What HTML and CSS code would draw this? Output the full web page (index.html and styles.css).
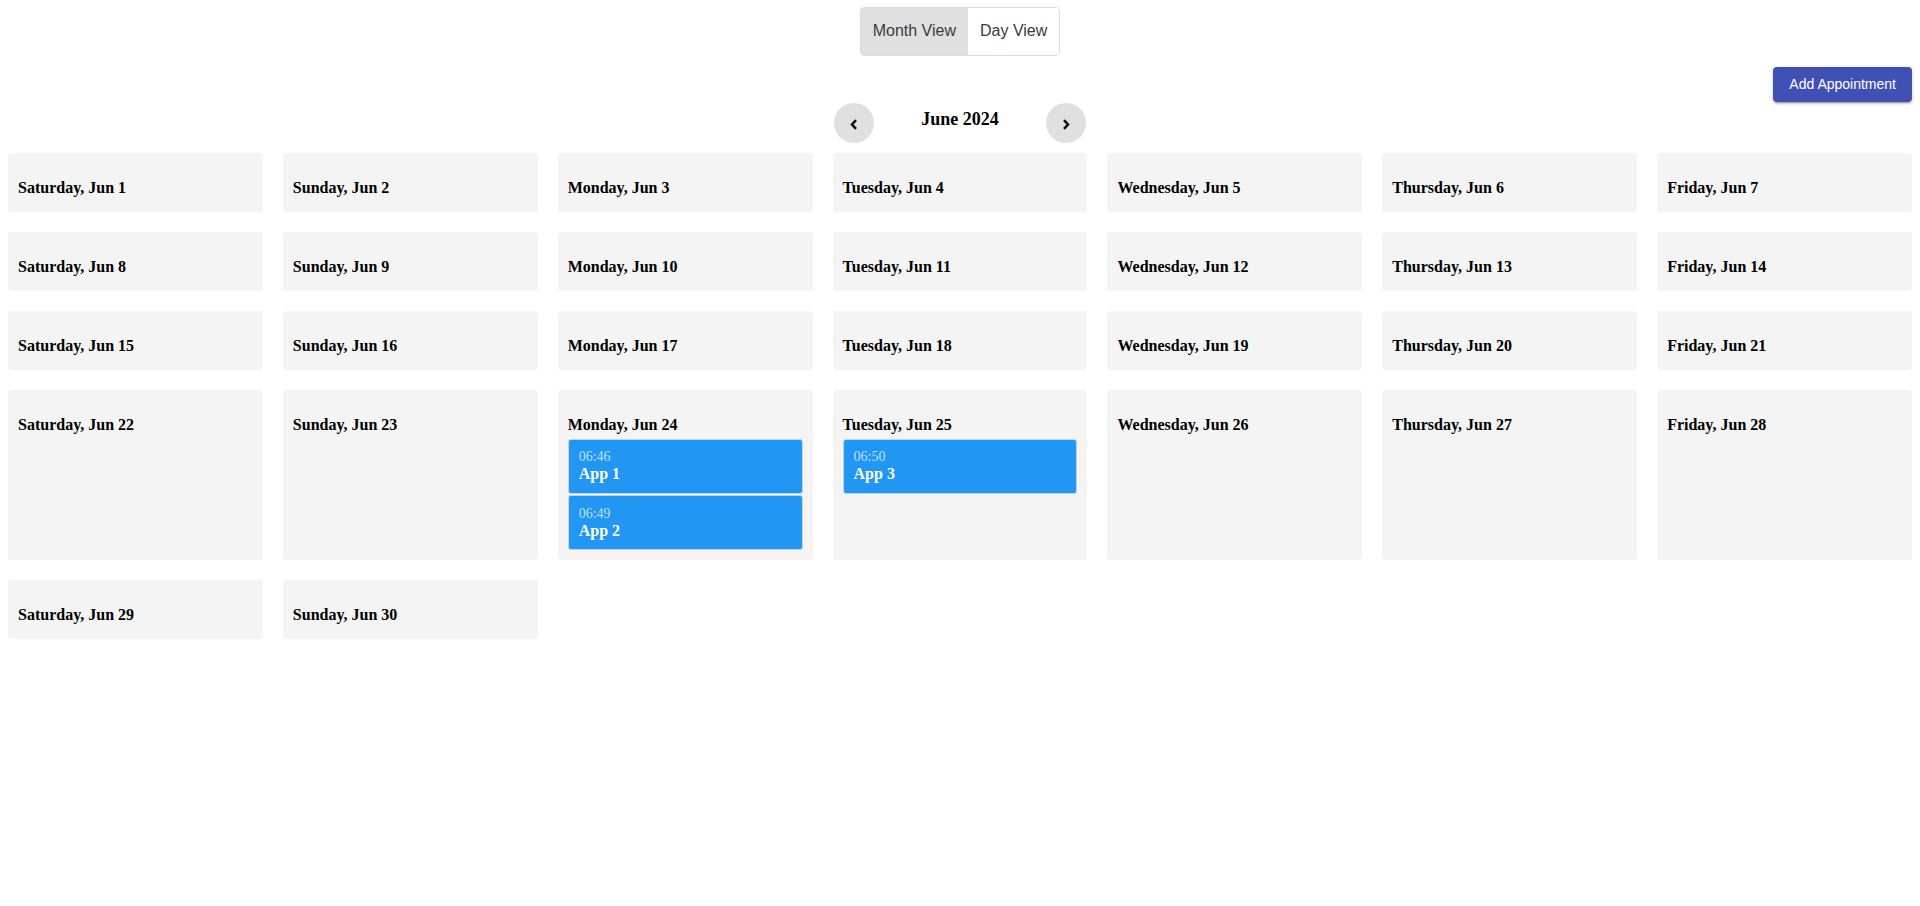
FILE: index.html
```html
<!DOCTYPE html>
<html lang="en">
<head>
<meta charset="utf-8">
<title>Calendar</title>
<link rel="stylesheet" href="styles.css">
</head>
<body>
<div class="app">
  <div class="view-switch">
    <div class="toggle-group">
      <button class="toggle active">Month View</button>
      <button class="toggle">Day View</button>
    </div>
  </div>
  <div class="toolbar">
    <button class="add-btn">Add Appointment</button>
  </div>
  <div class="month-nav">
    <button class="nav-btn" aria-label="Previous month"><svg width="8" height="11" viewBox="0 0 8 11"><polyline points="6,1.2 2,5.5 6,9.8" fill="none" stroke="#111" stroke-width="2.5"/></svg></button>
    <h3 class="month-title">June 2024</h3>
    <button class="nav-btn" aria-label="Next month"><svg width="8" height="11" viewBox="0 0 8 11"><polyline points="2,1.2 6,5.5 2,9.8" fill="none" stroke="#111" stroke-width="2.5"/></svg></button>
  </div>
  <div class="month-grid">
    <div class="day"><h4>Saturday, Jun 1</h4></div>
    <div class="day"><h4>Sunday, Jun 2</h4></div>
    <div class="day"><h4>Monday, Jun 3</h4></div>
    <div class="day"><h4>Tuesday, Jun 4</h4></div>
    <div class="day"><h4>Wednesday, Jun 5</h4></div>
    <div class="day"><h4>Thursday, Jun 6</h4></div>
    <div class="day"><h4>Friday, Jun 7</h4></div>
    <div class="day"><h4>Saturday, Jun 8</h4></div>
    <div class="day"><h4>Sunday, Jun 9</h4></div>
    <div class="day"><h4>Monday, Jun 10</h4></div>
    <div class="day"><h4>Tuesday, Jun 11</h4></div>
    <div class="day"><h4>Wednesday, Jun 12</h4></div>
    <div class="day"><h4>Thursday, Jun 13</h4></div>
    <div class="day"><h4>Friday, Jun 14</h4></div>
    <div class="day"><h4>Saturday, Jun 15</h4></div>
    <div class="day"><h4>Sunday, Jun 16</h4></div>
    <div class="day"><h4>Monday, Jun 17</h4></div>
    <div class="day"><h4>Tuesday, Jun 18</h4></div>
    <div class="day"><h4>Wednesday, Jun 19</h4></div>
    <div class="day"><h4>Thursday, Jun 20</h4></div>
    <div class="day"><h4>Friday, Jun 21</h4></div>
    <div class="day"><h4>Saturday, Jun 22</h4></div>
    <div class="day"><h4>Sunday, Jun 23</h4></div>
    <div class="day">
      <h4>Monday, Jun 24</h4>
      <div class="appts">
        <div class="appt"><div class="appt-time">06:46</div><div class="appt-title">App 1</div></div>
        <div class="appt"><div class="appt-time">06:49</div><div class="appt-title">App 2</div></div>
      </div>
    </div>
    <div class="day">
      <h4>Tuesday, Jun 25</h4>
      <div class="appts">
        <div class="appt"><div class="appt-time">06:50</div><div class="appt-title">App 3</div></div>
      </div>
    </div>
    <div class="day"><h4>Wednesday, Jun 26</h4></div>
    <div class="day"><h4>Thursday, Jun 27</h4></div>
    <div class="day"><h4>Friday, Jun 28</h4></div>
    <div class="day"><h4>Saturday, Jun 29</h4></div>
    <div class="day"><h4>Sunday, Jun 30</h4></div>
  </div>
</div>
</body>
</html>
```
FILE: styles.css
```css
html, body {
  margin: 0;
  padding: 0;
  background: #fff;
}

body {
  font-family: "Liberation Serif", "Times New Roman", serif;
  color: #000;
}

.app {
  padding: 7px 8px 0;
}

.view-switch {
  display: flex;
  justify-content: center;
}

.toggle-group {
  display: inline-flex;
  border: 1px solid #dcdcdc;
  border-radius: 4px;
  overflow: hidden;
}

.toggle {
  font-family: "Liberation Sans", Arial, sans-serif;
  font-size: 16px;
  line-height: 18.5px;
  color: #3a3a3a;
  background: #fff;
  border: none;
  margin: 0;
  padding: 14px 12px;
  cursor: pointer;
}

.toggle.active {
  background: #e0e0e0;
}

.toolbar {
  display: flex;
  justify-content: flex-end;
  margin-top: 11px;
}

.add-btn {
  font-family: "Liberation Sans", Arial, sans-serif;
  font-size: 14px;
  line-height: 17px;
  color: #fff;
  background: #3f51b5;
  border: none;
  border-radius: 4px;
  padding: 9px 16px;
  box-shadow: 0 3px 1px -2px rgba(0,0,0,0.2), 0 2px 2px 0 rgba(0,0,0,0.14), 0 1px 5px 0 rgba(0,0,0,0.12);
  cursor: pointer;
}

.month-nav {
  display: flex;
  justify-content: center;
  align-items: flex-start;
  gap: 47px;
  margin-top: 1px;
}

.nav-btn {
  width: 40px;
  height: 40px;
  border-radius: 50%;
  border: none;
  background: #e0e0e0;
  padding: 0;
  display: flex;
  align-items: center;
  justify-content: center;
  cursor: pointer;
}

.nav-btn svg {
  margin-top: 3px;
}

.month-title {
  font-size: 18px;
  font-weight: bold;
  margin: 6px 0 0;
}

.month-grid {
  display: grid;
  grid-template-columns: repeat(7, 1fr);
  gap: 20px;
  margin-top: 10px;
  align-items: stretch;
}

.day {
  background: #f4f4f4;
  border-radius: 4px;
  padding: 10px;
}

.day h4 {
  font-size: 16px;
  font-weight: bold;
  margin: 16px 0 5px;
}

.appts {
  display: flex;
  flex-direction: column;
  gap: 1.5px;
}

.appt {
  background: #2196f3;
  border: 1px solid #c9d3dd;
  border-radius: 3px;
  padding: 9.5px 10px;
  color: #fff;
}

.appt-time {
  font-size: 14px;
  color: rgba(255, 255, 255, 0.72);
}

.appt-title {
  font-size: 16px;
  font-weight: bold;
}
```
